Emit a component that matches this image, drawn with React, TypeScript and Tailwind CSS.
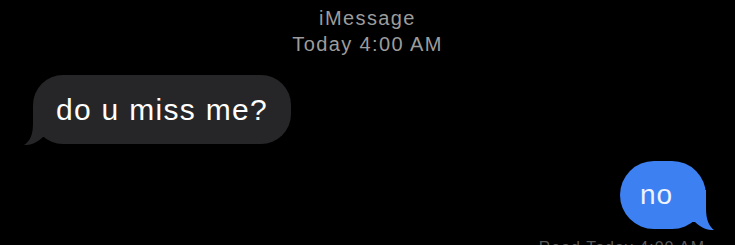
export default function App() {
  return (
    <div className="flex h-[245px] w-full flex-col overflow-hidden bg-black font-['Liberation_Sans',Arial,sans-serif]">
      <div className="pt-[5px] text-center text-[20px] leading-[26px] tracking-[1.4px] text-[#9c9c9c]">
        <div>iMessage</div>
        <div>Today 4:00 AM</div>
      </div>

      <div className="mt-[18px] flex pl-[33px]">
        <div className="relative flex h-[69px] items-center rounded-[30px] bg-[#262628] px-[23px]">
          <svg
            aria-hidden="true"
            viewBox="0 0 32 40"
            className="absolute bottom-[-1px] left-[-11px] h-[40px] w-[32px]"
          >
            <path
              d="M11 0 L11 18 C11 30 8 36 2 40 C9 40.5 16 37 21 32 L32 32 L32 0 Z"
              fill="#262628"
            />
          </svg>
          <span className="relative text-[30px] leading-none tracking-[1.3px] text-white">
            do u miss me?
          </span>
        </div>
      </div>

      <div className="mt-[17px] flex justify-end pr-[29px]">
        <div className="relative flex h-[68px] w-[86px] items-center rounded-[34px] bg-[#3d80f2] pl-[20px]">
          <svg
            aria-hidden="true"
            viewBox="0 0 32 40"
            className="absolute bottom-[-1px] right-[-10px] h-[40px] w-[32px] -scale-x-100"
          >
            <path
              d="M10 0 L10 18 C10 30 7 36 2 40 C9 40.5 16 37 21 32 L32 32 L32 0 Z"
              fill="#3d80f2"
            />
          </svg>
          <span className="relative text-[28px] leading-none tracking-[1px] text-[#eef3ff]">
            no
          </span>
        </div>
      </div>

      <div className="mt-[9px] pr-[30px] text-right text-[16px] leading-[20px] tracking-[1px] text-[#5a5a5a]">
        Read Today 4:00 AM
      </div>
    </div>
  );
}
